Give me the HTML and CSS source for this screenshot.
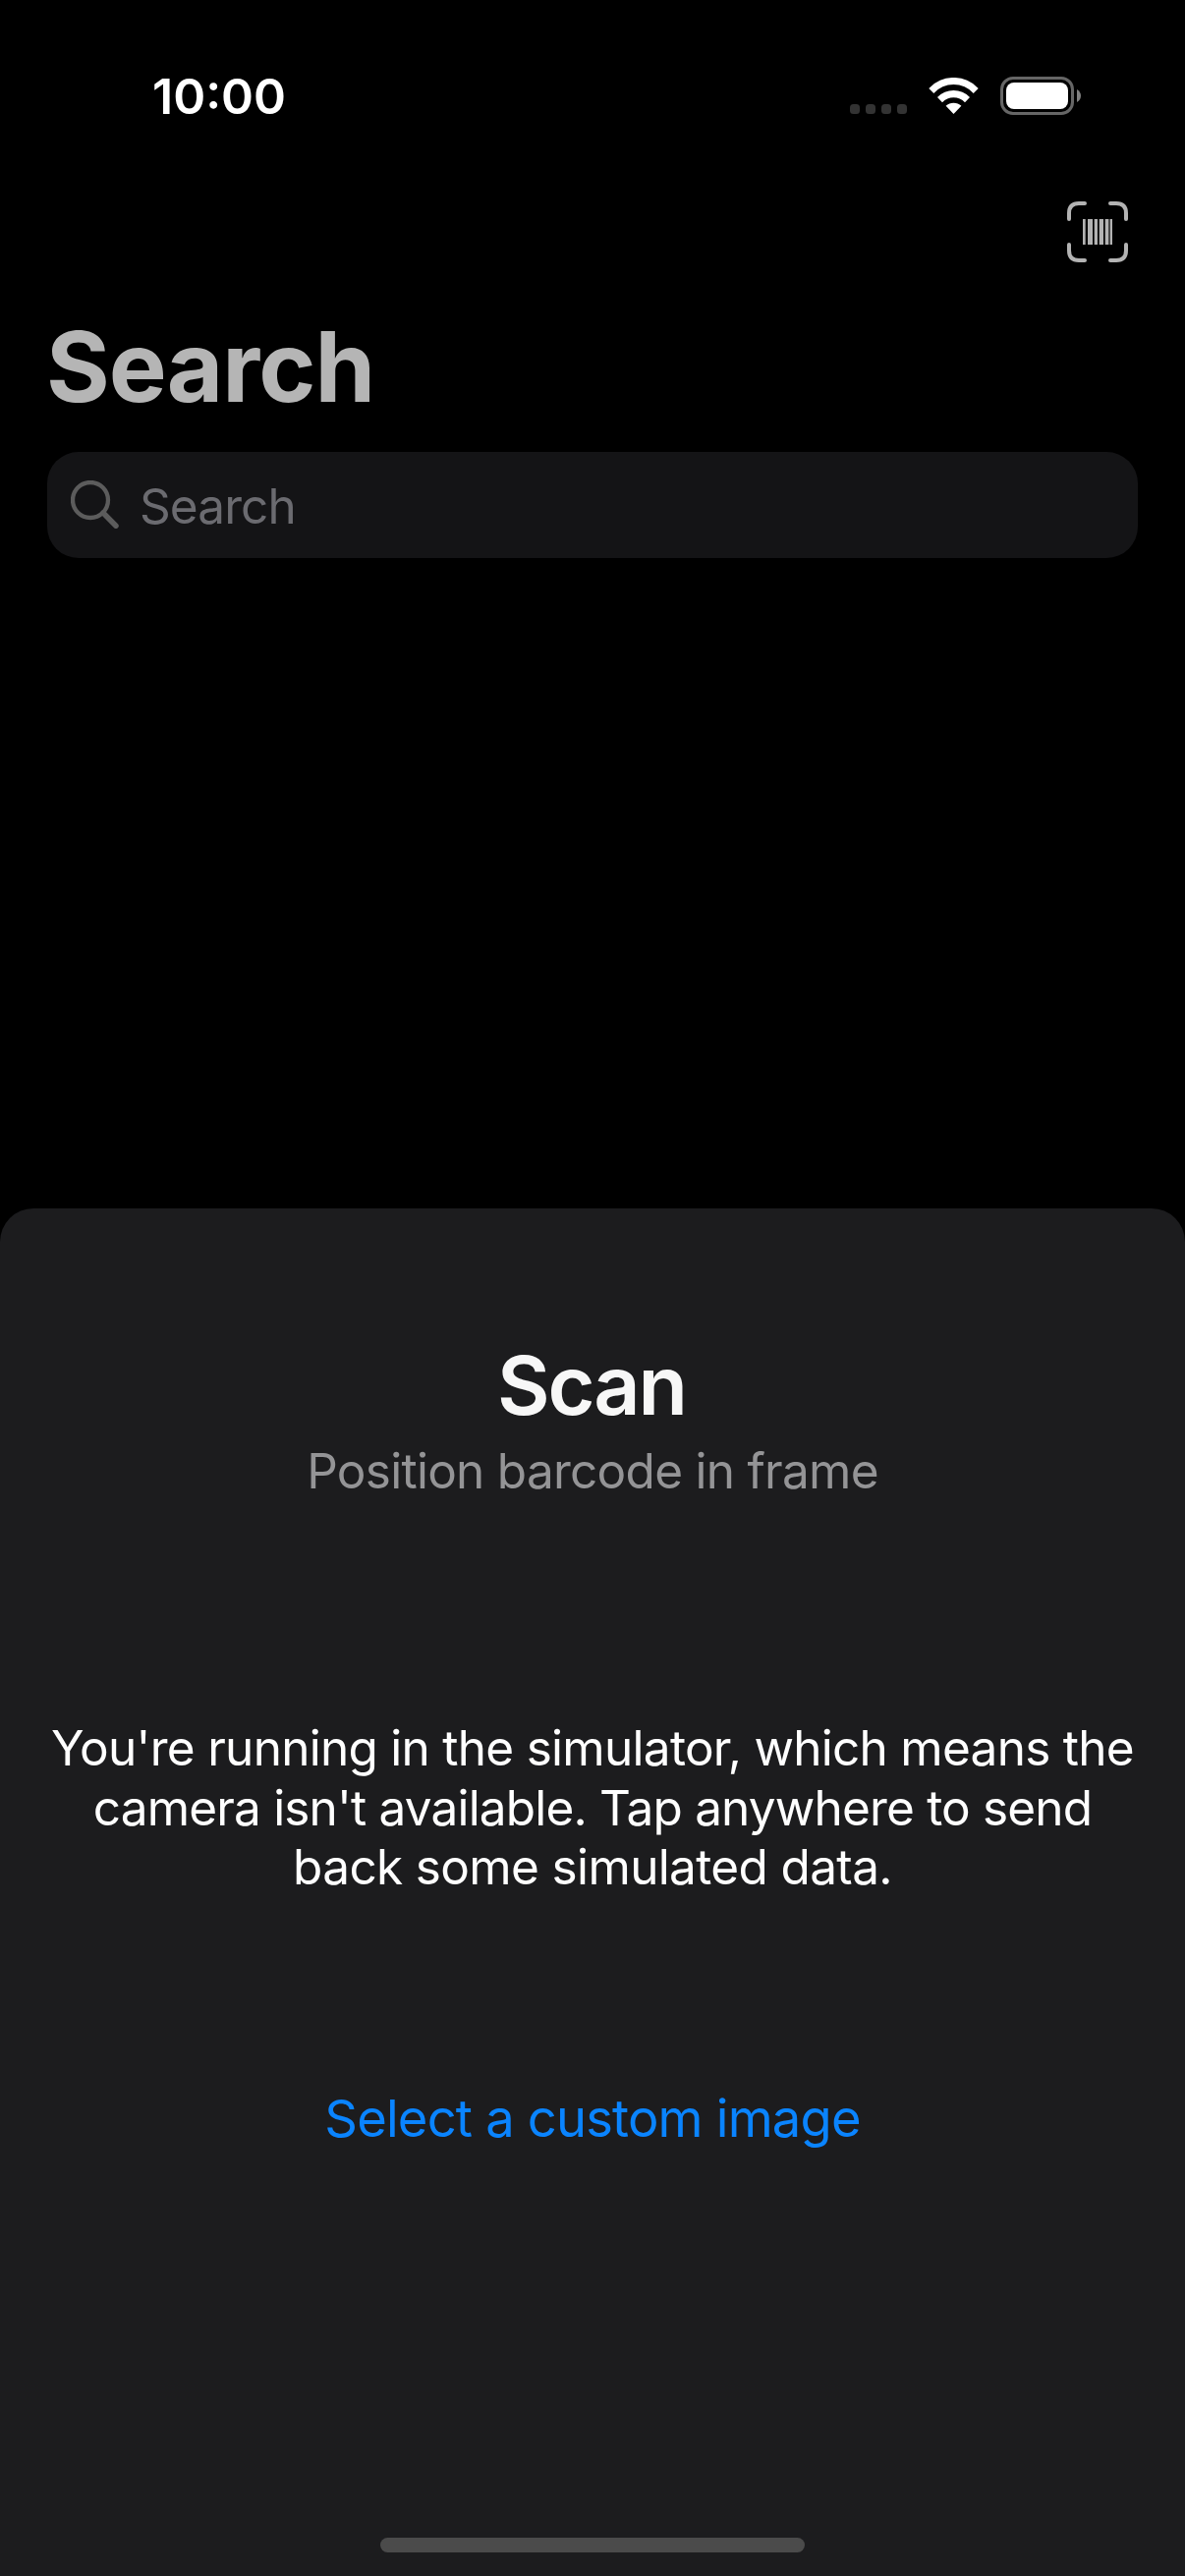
FILE: index.html
```
<!DOCTYPE html>
<html lang="en">
<head>
<meta charset="utf-8">
<title>Scan</title>
<link rel="stylesheet" href="styles.css">
</head>
<body>
<div class="screen">
  <header class="status">
    <span class="time">10:00</span>
    <div class="indicators">
      <svg class="dots" viewBox="0 0 58 10"><rect width="10" height="10" rx="3.5"/><rect x="16" width="10" height="10" rx="3.5"/><rect x="32" width="10" height="10" rx="3.5"/><rect x="48" width="10" height="10" rx="3.5"/></svg>
      <svg class="wifi" viewBox="0 0 51 38"><path d="M.3 10.9A34.5 34.5 0 0 1 50.7 10.9L45.7 16A27 27 0 0 0 5.3 16Z"/><path d="M9 20A23 23 0 0 1 42 20L37 25.2A16 16 0 0 0 14 25.2Z"/><path d="M17.6 28.8A11.5 11.5 0 0 1 33.4 28.8L25.5 37Z"/></svg>
      <svg class="battery" viewBox="0 0 83 39"><rect class="shell" x="1.5" y="1.5" width="72" height="36" rx="11.5"/><rect class="charge" x="6" y="6" width="63" height="27" rx="8"/><path class="nub" d="M78 13Q82 15.500 82 19.500T78 26Z"/></svg>
    </div>
  </header>

  <nav class="toolbar">
    <svg class="scanner" viewBox="0 0 62 62">
      <path class="corners" d="M2 18V12Q2 2 12 2H18M44 2H50Q60 2 60 12V18M60 44V50Q60 60 50 60H44M18 60H12Q2 60 2 50V44"/>
      <path class="bars" d="M16 18h2.700v26h-2.700zM21 18h5v26h-5zM27.700 18h3.300v26h-3.300zM32.700 18h4.300v26h-4.300zM38.700 18h3.300v26h-3.300zM44 18h2v26h-2z"/>
      <path class="bars thin" d="M42 18h2v26h-2z"/>
    </svg>
  </nav>

  <h1 class="title">Search</h1>

  <div class="search">
    <svg class="glass" viewBox="0 0 50 50"><circle cx="20" cy="20" r="18"/><path d="M33 33L46 46.200"/></svg>
    <span class="placeholder">Search</span>
  </div>

  <main class="sheet">
    <h2 class="heading">Scan</h2>
    <p class="hint">Position barcode in frame</p>
    <p class="message">You're running in the simulator, which means the<br><span class="tight">camera isn't available. Tap anywhere to send</span><br><span class="loose">back some simulated data.</span></p>
    <a class="link">Select a custom image</a>
    <div class="home"></div>
  </main>
</div>
</body>
</html>
```
FILE: styles.css
```
* { box-sizing: border-box; margin: 0; padding: 0; }

body {
  background: #000;
  color: #fff;
  font-family: Inter, "Liberation Sans", sans-serif;
}

.screen {
  display: flex;
  flex-direction: column;
  width: 1206px;
  height: 2622px;
  overflow: hidden;
  background: #000;
}

svg { display: block; }

.status {
  display: flex;
  justify-content: space-between;
  height: 205px;
  padding: 68px 105px 0 155px;
}
.time { font-size: 50px; font-weight: 600; line-height: 60px; }
.indicators { display: flex; align-items: flex-end; height: 49px; }
.dots { width: 58px; height: 10px; margin: 0 22px 1px 0; fill: #333; }
.wifi { width: 51px; height: 38px; margin-right: 22px; fill: #fff; }
.battery { width: 83px; height: 39px; }
.shell { fill: none; stroke: #666; stroke-width: 3; }
.charge { fill: #fff; }
.nub { fill: #808080; }

.toolbar {
  display: flex;
  justify-content: flex-end;
  height: 108px;
  padding-right: 58px;
}
.scanner { width: 62px; height: 62px; }
.corners { fill: none; stroke: #b3b3b3; stroke-width: 4; stroke-linecap: round; }
.bars { fill: #b3b3b3; }
.thin { opacity: .4; }

.title {
  height: 147px;
  padding-left: 47px;
  color: #b5b5b5;
  font-size: 99px;
  font-weight: 700;
  line-height: 120px;
  letter-spacing: -1px;
}

.search {
  display: flex;
  height: 108px;
  margin: 0 48px;
  padding: 25px 24px;
  border-radius: 32px;
  background: #141416;
}
.glass {
  width: 50px;
  height: 50px;
  margin: 4px 20px 0 0;
  fill: none;
  stroke: #5c5c5c;
  stroke-width: 4.3;
  stroke-linecap: round;
}
.glass path { stroke-width: 5.5; }
.placeholder {
  color: #6b6b70;
  font-size: 49.5px;
  line-height: 60px;
  letter-spacing: -.9px;
}

.sheet {
  display: flex;
  flex-direction: column;
  align-items: center;
  flex: 1;
  margin-top: 662px;
  padding: 130px 0 24px;
  border-radius: 34px 34px 0 0;
  background: #1c1c1e;
  text-align: center;
}
.heading {
  margin-right: 2px;
  color: #f7f7f7;
  font-size: 82.5px;
  font-weight: 600;
  line-height: 100px;
  letter-spacing: -2.1px;
}
.hint {
  margin-top: 7px;
  color: #949496;
  font-size: 49.5px;
  line-height: 60px;
  letter-spacing: -.725px;
}
.message {
  margin-top: 222px;
  font-size: 49.5px;
  line-height: 60.5px;
  letter-spacing: -.72px;
}
.tight { letter-spacing: -.82px; }
.loose { letter-spacing: -.64px; }
.link {
  margin-top: 193px;
  color: #0a84ff;
  font-size: 52.5px;
  line-height: 64px;
  letter-spacing: -.81px;
}
.home {
  width: 432px;
  height: 15px;
  margin-top: auto;
  border-radius: 7.5px;
  background: #4b4b4b;
}
```
